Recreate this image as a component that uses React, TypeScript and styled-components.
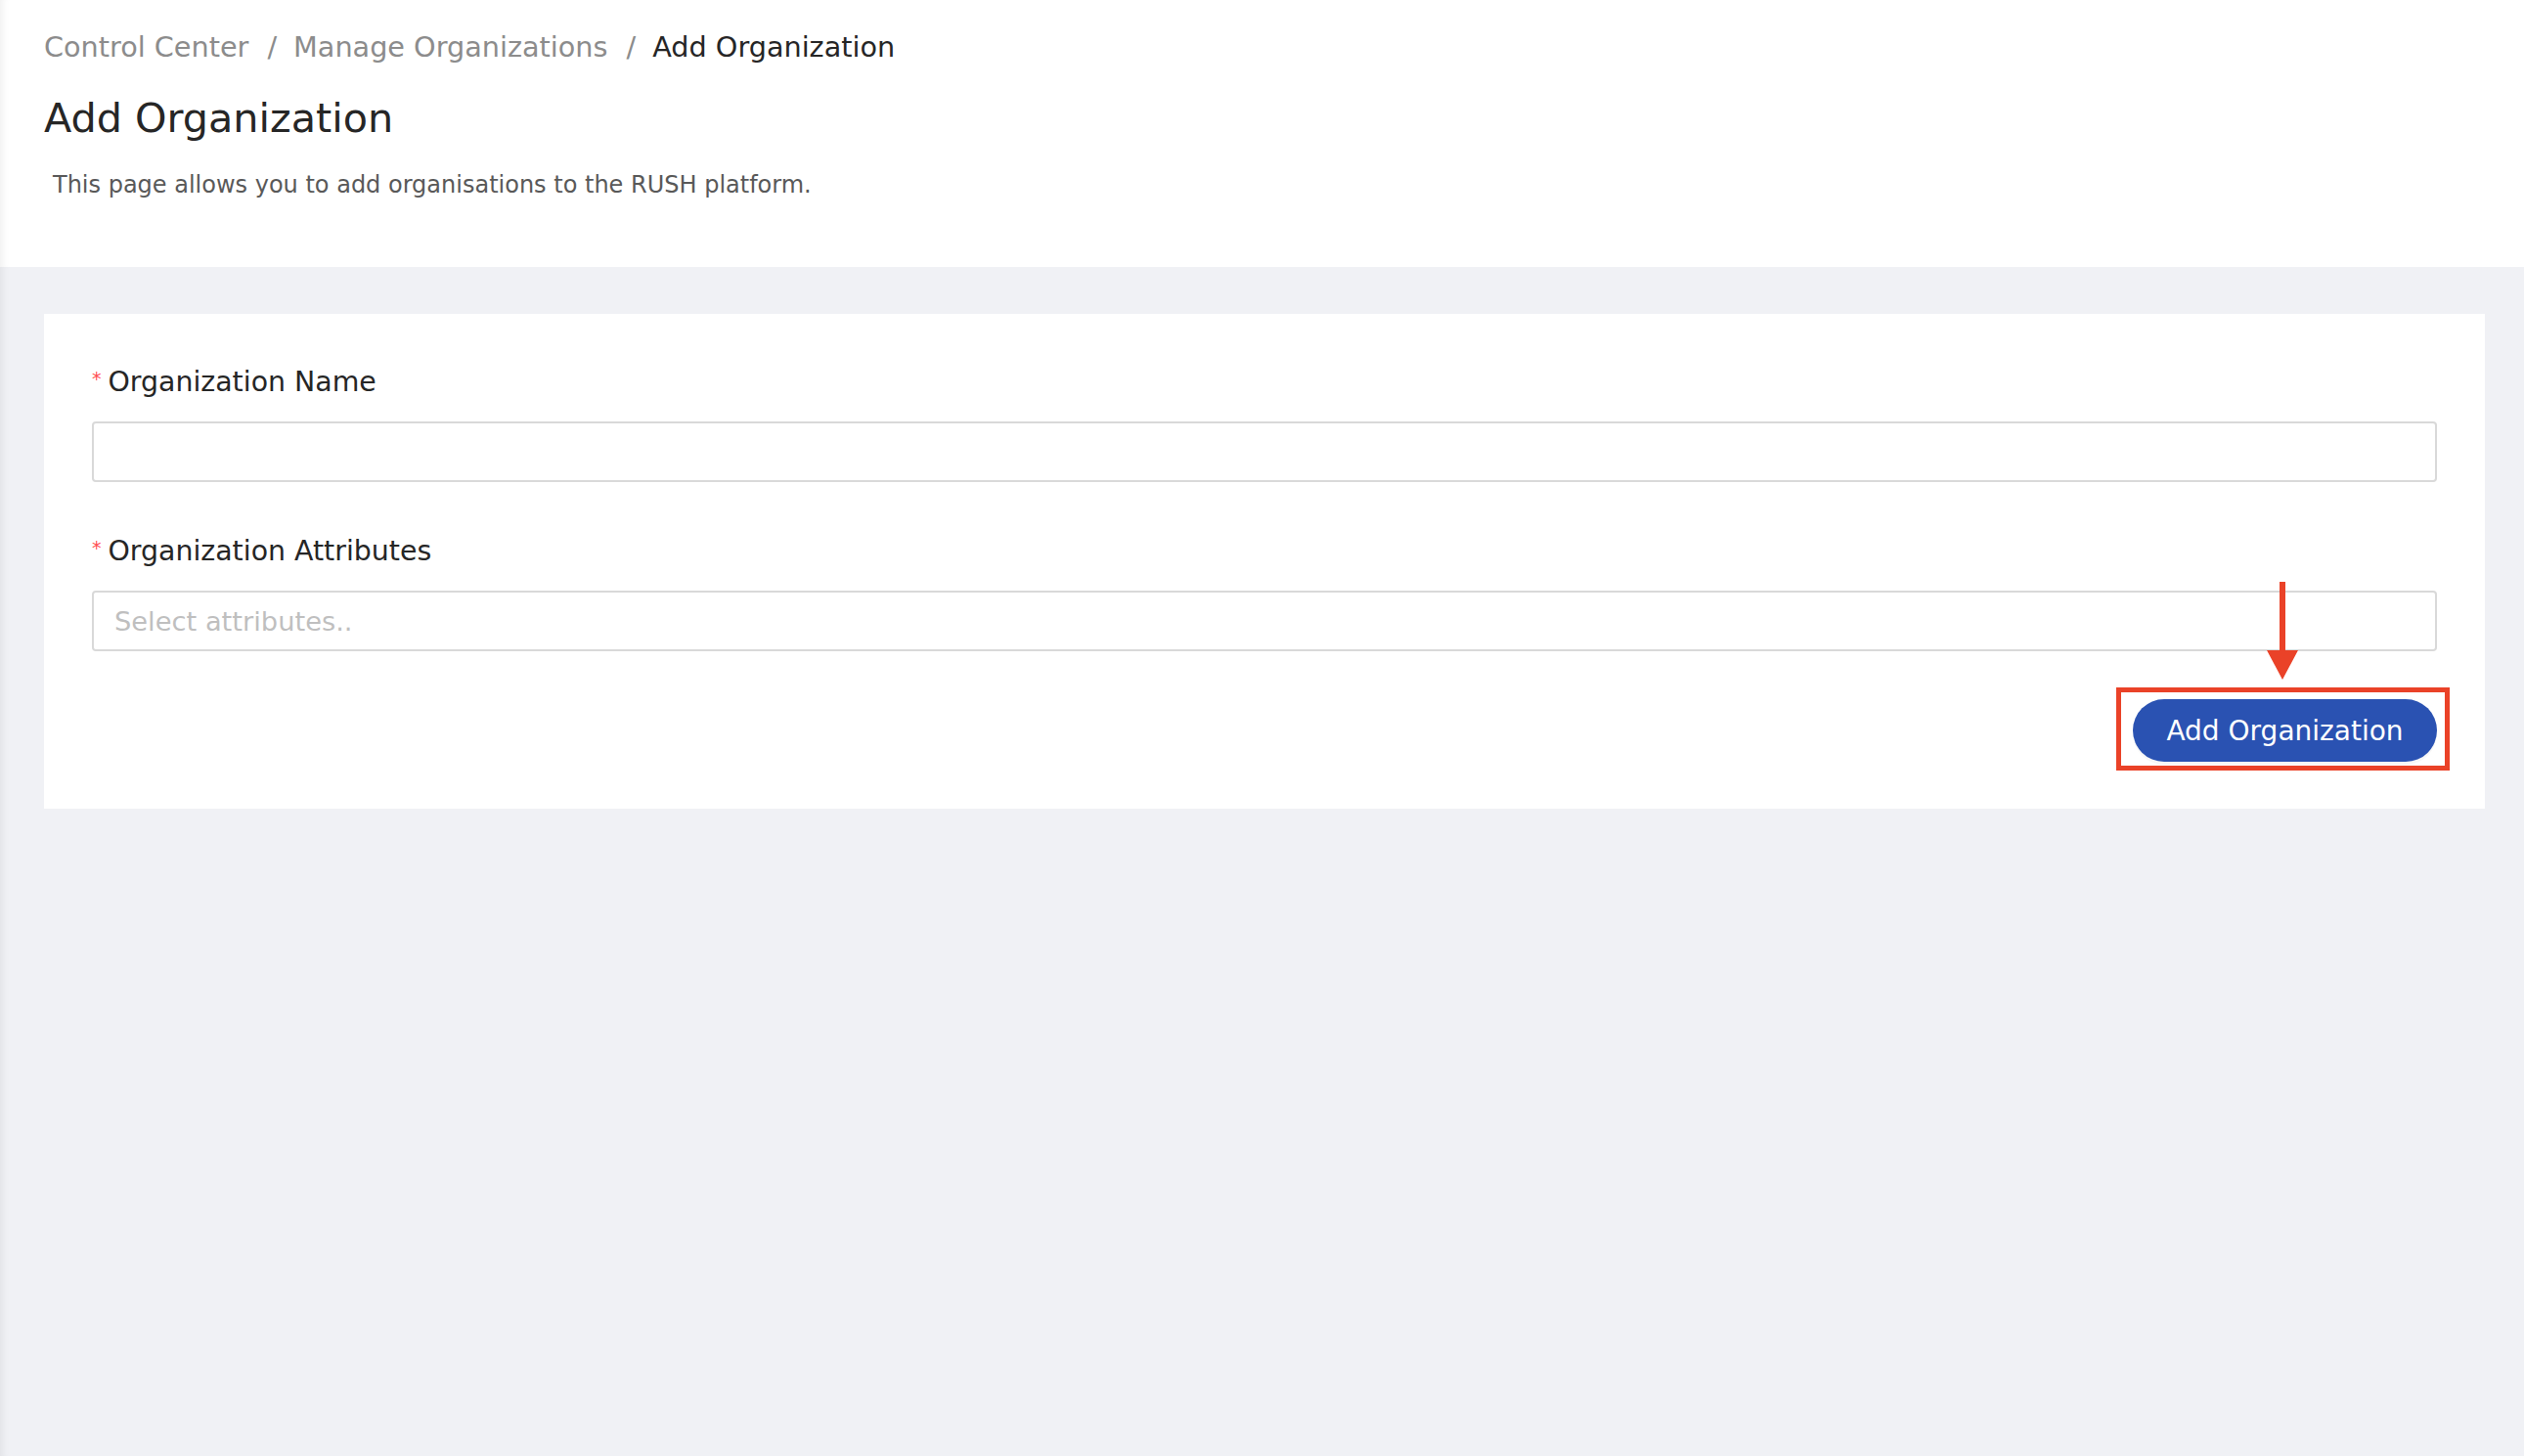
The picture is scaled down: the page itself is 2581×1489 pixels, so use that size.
import styled, { createGlobalStyle } from "styled-components";

const GlobalStyle = createGlobalStyle`
   html, body {
      margin: 0;
      padding: 0;
      background: #f0f1f5;
   }
   * {
      box-sizing: border-box;
   }
   body {
      font-family: "DejaVu Sans", "Open Sans", sans-serif;
   }
`;

const crumbs = [
   { label: "Control Center", current: false },
   { label: "Manage Organizations", current: false },
   { label: "Add Organization", current: true },
];

function App() {
   return (
      <>
         <GlobalStyle />
         <Page>
            <Header>
               <Breadcrumb>
                  {crumbs.map((crumb, i) => (
                     <Crumb key={crumb.label} current={crumb.current}>
                        {i > 0 && <Separator>/</Separator>}
                        {crumb.label}
                     </Crumb>
                  ))}
               </Breadcrumb>
               <Title>Add Organization</Title>
               <Description>
                  This page allows you to add organisations to the RUSH platform.
               </Description>
            </Header>
            <Content>
               <Card>
                  <Field>
                     <Label>
                        <Required>*</Required>
                        Organization Name
                     </Label>
                     <Input type="text" />
                  </Field>
                  <Field>
                     <Label>
                        <Required>*</Required>
                        Organization Attributes
                     </Label>
                     <Input type="text" placeholder="Select attributes.." />
                  </Field>
                  <Actions>
                     <ButtonWrap>
                        <Arrow width="32" height="100" viewBox="0 0 32 100">
                           <rect x="13" y="0" width="6" height="72" fill="#ea4228" />
                           <polygon points="0,70 32,70 16,100" fill="#ea4228" />
                        </Arrow>
                        <PrimaryButton>Add Organization</PrimaryButton>
                        <Highlight />
                     </ButtonWrap>
                  </Actions>
               </Card>
            </Content>
         </Page>
      </>
   );
}

export default App;

const edgeShadow = `box-shadow: inset 9px 0 8px -7px rgba(0, 0, 0, 0.07);`;

const Page = styled.div`
   display: flex;
   flex-direction: column;
   min-height: 100vh;
`;

const Header = styled.header`
   height: 273px;
   background: #fff;
   padding: 28px 40px 0 45px;
   ${edgeShadow}
`;

const Breadcrumb = styled.nav`
   display: flex;
   align-items: center;
   font-size: 28.7px;
   line-height: 40px;
`;

const Crumb = styled.span<{ current?: boolean }>`
   color: ${({ current }) => (current ? "#262626" : "#8c8c8c")};
`;

const Separator = styled.span`
   color: #8c8c8c;
   margin: 0 17px 0 19px;
`;

const Title = styled.h1`
   margin: 27px 0 0;
   font-size: 41.3px;
   line-height: 52px;
   font-weight: 500;
   color: #262626;
`;

const Description = styled.p`
   margin: 26px 0 0 9px;
   font-size: 24px;
   line-height: 32px;
   color: #595959;
`;

const Content = styled.main`
   flex: 1;
   padding: 48px 40px 48px 45px;
   ${edgeShadow}
`;

const Card = styled.section`
   background: #fff;
   padding: 52px 49px 48px 49px;
   display: flex;
   flex-direction: column;
   gap: 53px;
`;

const Field = styled.div`
   display: flex;
   flex-direction: column;
   gap: 22px;
`;

const Label = styled.label`
   display: flex;
   align-items: center;
   font-size: 28.4px;
   line-height: 36px;
   color: #262626;
`;

const Required = styled.span`
   color: #ff4d4f;
   font-size: 19px;
   line-height: 1;
   margin-right: 7px;
   margin-top: -8px;
`;

const Input = styled.input`
   height: 62px;
   width: 100%;
   border: 2px solid #d9d9d9;
   border-radius: 4px;
   background: #fff;
   padding: 0 21px;
   font-family: inherit;
   font-size: 27.3px;
   color: #262626;
   outline: none;

   &::placeholder {
      color: #bfbfbf;
   }
`;

const Actions = styled.div`
   display: flex;
   justify-content: flex-end;
   margin-top: -4px;
`;

const ButtonWrap = styled.div`
   position: relative;
`;

const PrimaryButton = styled.button`
   display: block;
   width: 311px;
   height: 64px;
   border: none;
   border-radius: 32px;
   background: #2a52b2;
   color: #fff;
   font-family: inherit;
   font-size: 28px;
   box-shadow: 0 3px 0 rgba(0, 0, 0, 0.03);
   cursor: pointer;
`;

const Highlight = styled.div`
   position: absolute;
   top: -12px;
   left: -17px;
   right: -13px;
   bottom: -9px;
   border: 5px solid #ea4228;
   pointer-events: none;
`;

const Arrow = styled.svg`
   position: absolute;
   top: -120px;
   left: 137px;
`;
